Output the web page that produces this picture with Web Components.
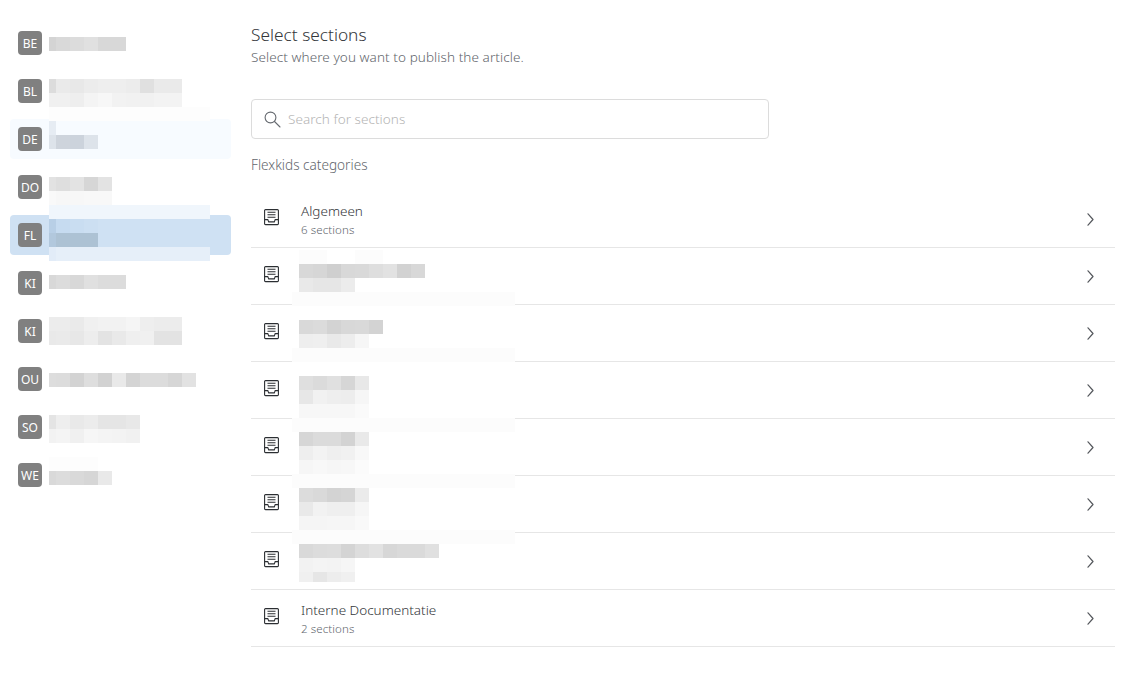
<!DOCTYPE html>
<html lang="en">
<head>
<meta charset="utf-8">
<title>Select sections</title>
<style>
    html, body { margin: 0; background: #fff; }
    body { font-family: "Noto Sans", sans-serif; font-weight: 300; color: #33363a; }
</style>
</head>
<body>
<section-picker>
    <section-sidebar slot="sidebar">
        <sidebar-item code="BE">
            <pixel-block left="39" top="14" first="7" rows="d4 d9 dc e0 d8 d8"></pixel-block>
        </sidebar-item>
        <sidebar-item code="BL">
            <pixel-block left="39" top="8" first="7" rows="dc ea e8 ec ee ee ec e0 ea ea|f0 f0 ee f4 f7 f2 f1 f1 f3 f3"></pixel-block>
        </sidebar-item>
        <sidebar-item code="DE" state="hover">
            <pixel-block left="39" top="-12" first="7" rows="fd fd fd fd fd fd fd fd fd fd fd fd|e6ecf3 f7fbff|dde3ea ced4dc ccd3dc dde3ea"></pixel-block>
        </sidebar-item>
        <sidebar-item code="DO">
            <pixel-block left="39" top="10" first="7" rows="e2 de e3 d6 e3|f9 f7 f7 f8 f8"></pixel-block>
        </sidebar-item>
        <sidebar-item code="FL" state="selected">
            <pixel-block left="39" top="-10" first="7" rows="f0f6fc f0f6fc f0f6fc f0f6fc f0f6fc f0f6fc f0f6fc f0f6fc f0f6fc f0f6fc f0f6fc f0f6fc|b8cfe6 c6dbf0 c9ddf1 ccdff2|b2c8dd adc2d4 adc2d4 adc2d4|e2ecf8 e6eff9 e6eff9 e6eff9 e6eff9 e6eff9 e6eff9 e6eff9 e6eff9 e6eff9 e6eff9 e6eff9"></pixel-block>
        </sidebar-item>
        <sidebar-item code="KI">
            <pixel-block left="39" top="12" first="7" rows="d8 dc d8 e0 dc dc"></pixel-block>
        </sidebar-item>
        <sidebar-item code="KI">
            <pixel-block left="39" top="6" first="7" rows="ec ec ea f0 f2 f2 f5 ee ec ec|e9 ea e7 ed e3 e9 ef f0 e3 e3"></pixel-block>
        </sidebar-item>
        <sidebar-item code="OU">
            <pixel-block left="39" top="14" first="7" rows="dd dc d3 de d2 e9 d4 dc dc d6 e2"></pixel-block>
        </sidebar-item>
        <sidebar-item code="SO">
            <pixel-block left="39" top="8" first="7" rows="e4 ee e9 ec e5 e5 e8|f2 f4 f0 f6 f4 f3 f1"></pixel-block>
        </sidebar-item>
        <sidebar-item code="WE">
            <pixel-block left="39" top="2" first="7" rows="fd fd fd fd|d9 dc d9 d6 e9"></pixel-block>
        </sidebar-item>
    </section-sidebar>

    <section-heading title-text="Select sections" sub-text="Select where you want to publish the article."></section-heading>
    <section-search placeholder="Search for sections"></section-search>
    <list-label>Flexkids categories</list-label>

    <category-list>
        <category-row name="Algemeen" count="6 sections"></category-row>
        <category-row>
            <pixel-block left="48" top="2" first="14" rows="fc fc fff fff fc fc|d8 d6 cf d8 d9 de e2 d2 d8|e9 e6 e6 ec"></pixel-block>
            <pixel-block left="41" top="44" first="13" rows="fc fc fc fc fc fc fc fc fc fc fc fc fc fc fc fc"></pixel-block>
        </category-row>
        <category-row>
            <pixel-block left="48" top="15" first="14" rows="d9 db d3 d8 d9 d3|ee ef e9 ed f6"></pixel-block>
            <pixel-block left="41" top="43" first="13" rows="fc fc fc fc fc fc fc fc fc fc fc fc fc fc fc fc"></pixel-block>
        </category-row>
        <category-row>
            <pixel-block left="48" top="14" first="14" rows="df db e0 d6 e8|e7 f1 ee ed f6|f7 f7 f7 f7 fa"></pixel-block>
        </category-row>
        <category-row>
            <pixel-block left="41" top="-1" first="13" rows="fc fc fc fc fc fc fc fc fc fc fc fc fc fc fc fc"></pixel-block>
            <pixel-block left="48" top="13" first="14" rows="d6 db db d3 e9|ee f3 ef f1 f8|f6 f8 f6 f7 fb"></pixel-block>
        </category-row>
        <category-row>
            <pixel-block left="41" top="-2" first="13" rows="fc fc fc fc fc fc fc fc fc fc fc fc fc fc fc fc"></pixel-block>
            <pixel-block left="48" top="12" first="14" rows="dc d9 d3 d5 eb|e9 f2 ef ef f6|f5 f5 f6 f6 f9"></pixel-block>
        </category-row>
        <category-row>
            <pixel-block left="41" top="-3" first="13" rows="fc fc fc fc fc fc fc fc fc fc fc fc fc fc fc fc"></pixel-block>
            <pixel-block left="48" top="11" first="14" clip="38" rows="d9 dc dd d4 dd e2 d7 da da e0|f2 f4 f3 f6|f0 e6 ed f0"></pixel-block>
        </category-row>
        <category-row name="Interne Documentatie" count="2 sections"></category-row>
    </category-list>
</section-picker>

<script>
// base class, every element just stamps its markup in an open shadow root
class ShadowElement extends HTMLElement {
    constructor() {
        super();
        this.shadowDOM = this.attachShadow({mode: 'open'});
    }

    connectedCallback() {
        this.shadowDOM.innerHTML = this.render();
    }
}

// the blocky pixelation that hides real names
class PixelBlock extends ShadowElement {
    render() {
        const first = Number(this.getAttribute('first'));
        const clip = this.getAttribute('clip');
        const rows = this.getAttribute('rows').split('|').map(row => {
            const cells = row.split(' ').filter(Boolean).map((value, i) => {
                const colour = value.length === 2 ? value.repeat(3) : value === 'fff' ? 'ffffff00' : value;
                return `<i style="width:${i === 0 ? first : 14}px;background:#${colour}"></i>`;
            });
            return `<div class="row">${cells.join('')}</div>`;
        });
        return `
            <style>
                :host {
                    position: absolute;
                    left: ${this.getAttribute('left')}px;
                    top: ${this.getAttribute('top')}px;
                    display: block;
                    ${clip ? `height: ${clip}px; overflow: hidden;` : ''}
                }
                .row { display: flex; height: 14px; }
                i { display: block; height: 14px; }
            </style>
            ${rows.join('')}
        `;
    }
}

class SectionPicker extends ShadowElement {
    render() {
        return `
            <style>
                :host { display: flex; gap: 20px; padding: 23px 22px 0 10px; height: 663px; }
                .main { display: flex; flex-direction: column; flex: 1; min-width: 0; }
            </style>
            <slot name="sidebar"></slot>
            <div class="main"><slot></slot></div>
        `;
    }
}

class SectionSidebar extends ShadowElement {
    render() {
        return `
            <style>
                :host { display: flex; flex-direction: column; gap: 8px; width: 221px; flex: none; }
            </style>
            <slot></slot>
        `;
    }
}

class SidebarItem extends ShadowElement {
    render() {
        const state = this.getAttribute('state');
        const background = state === 'selected' ? '#cfe1f3' : state === 'hover' ? '#f7fbff' : 'transparent';
        return `
            <style>
                :host {
                    display: flex;
                    align-items: center;
                    position: relative;
                    height: 40px;
                    padding-left: 8px;
                    border-radius: 4px;
                    background: ${background};
                }
                .badge {
                    display: flex;
                    align-items: center;
                    justify-content: center;
                    width: 24px;
                    height: 24px;
                    border-radius: 4px;
                    background: #808080;
                    color: #fff;
                    font-size: 12px;
                    font-weight: 400;
                }
            </style>
            <span class="badge">${this.getAttribute('code')}</span>
            <slot></slot>
        `;
    }
}

class SectionHeading extends ShadowElement {
    render() {
        return `
            <style>
                :host { display: block; }
                h1 { margin: 0; font-size: 17.3px; line-height: 24px; font-weight: 300; color: #33363a; }
                p { margin: 0; font-size: 13.5px; line-height: 20px; color: #62666c; letter-spacing: .08px; }
            </style>
            <h1>${this.getAttribute('title-text')}</h1>
            <p>${this.getAttribute('sub-text')}</p>
        `;
    }
}

class SectionSearch extends ShadowElement {
    render() {
        return `
            <style>
                :host {
                    display: flex;
                    align-items: center;
                    gap: 7px;
                    box-sizing: border-box;
                    width: 518px;
                    height: 40px;
                    margin-top: 32px;
                    padding-left: 12px;
                    border: 1px solid #dcdcdc;
                    border-radius: 4px;
                    background: #fff;
                }
                svg { display: block; flex: none; }
                span { font-size: 13.5px; color: #b4b4b4; letter-spacing: .05px; }
            </style>
            <svg width="17" height="17" viewBox="0 0 17 17" fill="none" stroke="#666a70" stroke-width="1.1" stroke-linecap="round">
                <circle cx="6.5" cy="6.5" r="5.4"/>
                <path d="M10.5 10.5 16 16"/>
            </svg>
            <span>${this.getAttribute('placeholder')}</span>
        `;
    }
}

class ListLabel extends ShadowElement {
    render() {
        return `
            <style>
                :host { display: block; margin-top: 16px; font-size: 13.6px; line-height: 20px; color: #62666c; }
            </style>
            <slot></slot>
        `;
    }
}

class CategoryList extends ShadowElement {
    render() {
        return `
            <style>
                :host { display: block; margin-top: 16px; }
            </style>
            <slot></slot>
        `;
    }
}

class CategoryRow extends ShadowElement {
    render() {
        const name = this.getAttribute('name');
        const text = name ? `
            <div class="text">
                <div class="name">${name}</div>
                <div class="count">${this.getAttribute('count')}</div>
            </div>` : '<div class="text"></div>';
        return `
            <style>
                :host {
                    display: flex;
                    align-items: flex-start;
                    position: relative;
                    box-sizing: border-box;
                    height: 57px;
                    padding: 18px 21px 0 13px;
                    border-bottom: 1px solid #e6e6e6;
                }
                .tray { display: block; flex: none; }
                .text { flex: 1; margin: -8px 0 0 22px; }
                .name { font-size: 13.5px; line-height: 20px; color: #33363a; }
                .count { font-size: 11.5px; line-height: 17px; color: #62666c; letter-spacing: .1px; }
                .chevron { display: block; flex: none; margin-top: 4px; }
            </style>
            <svg class="tray" width="15" height="17" viewBox="0 0 15 17" fill="none" stroke="#2b2e32" stroke-width="1.1">
                <path d="M1.5.6h12a.9.9 0 0 1 .9.9v13.2a.9.9 0 0 1-.9.9h-12a.9.9 0 0 1-.9-.9V1.500a.9.9 0 0 1 .9-.9z"/>
                <path d="M3.5 3.2h8M3.5 5.700h8M3.500 8.200h8"/>
                <path d="M.6 10.600h3.200l.9 2.300h5.600l.9-2.300h3.200"/>
            </svg>
            ${text}
            <svg class="chevron" width="7" height="13" viewBox="0 0 7 13" fill="none" stroke="#55585d" stroke-width="1.2" stroke-linecap="round" stroke-linejoin="round">
                <path d="M1 .8 6 6.5 1 12.2"/>
            </svg>
            <slot></slot>
        `;
    }
}

customElements.define('pixel-block', PixelBlock);
customElements.define('section-picker', SectionPicker);
customElements.define('section-sidebar', SectionSidebar);
customElements.define('sidebar-item', SidebarItem);
customElements.define('section-heading', SectionHeading);
customElements.define('section-search', SectionSearch);
customElements.define('list-label', ListLabel);
customElements.define('category-list', CategoryList);
customElements.define('category-row', CategoryRow);
</script>
</body>
</html>
